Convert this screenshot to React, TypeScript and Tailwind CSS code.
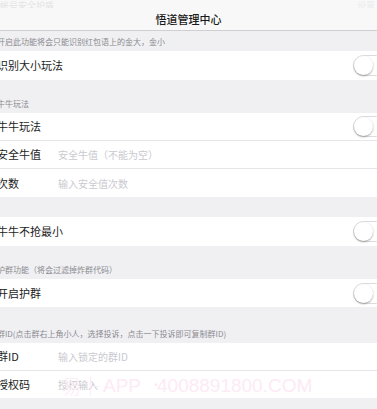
import React from 'react';

const font = { fontFamily: '"Noto Sans CJK SC", "Noto Sans", sans-serif' };

function Toggle() {
  return (
    <div className="relative -mr-[10px] h-[21px] w-[34px] shrink-0 rounded-full border border-[#dcdcdc] bg-white">
      <div className="absolute left-0 top-0 h-[19px] w-[19px] rounded-full bg-white shadow-[0_1px_2px_rgba(0,0,0,0.35)]" />
    </div>
  );
}

function Header({ text, h }: { text: string; h: string }) {
  return (
    <div className={`flex items-end pb-[4px] ${h}`}>
      <span className="-ml-[3px] whitespace-nowrap text-[8px] leading-[10px] text-[#8a8a8f]">{text}</span>
    </div>
  );
}

function Row({
  label,
  placeholder,
  toggle,
  border,
  h = 'h-[28px]',
}: {
  label: string;
  placeholder?: string;
  toggle?: boolean;
  border?: boolean;
  h?: string;
}) {
  return (
    <div className={`flex items-center bg-white ${h} ${border ? 'border-b border-[#e6e6e9]' : ''}`}>
      <span className="-ml-[3px] w-[61px] shrink-0 whitespace-nowrap text-[11px] text-[#1c1c1c]">{label}</span>
      {placeholder && <span className="whitespace-nowrap text-[10px] text-[#cacacf]">{placeholder}</span>}
      <div className="flex-1" />
      {toggle && <Toggle />}
    </div>
  );
}

export default function App() {
  return (
    <div className="relative h-[409px] w-[377px] overflow-hidden bg-[#f0f0f3]" style={font}>
      <div className="h-[31px] border-b border-[#cfcfd2] bg-[#f8f8f8]">
        <div className="flex h-[8px] items-end justify-between overflow-hidden">
          <span className="-mb-[3px] text-[9px] leading-[11px] text-[#e4e4e4]">帐号安全护盾</span>
          <span className="-mb-[3px] mr-[2px] text-[9px] leading-[11px] text-[#ececec]">设置</span>
        </div>
        <div className="flex h-[22px] items-center justify-center text-[11px] font-medium text-[#1a1a1a]">
          悟道管理中心
        </div>
      </div>

      <Header text="开启此功能将会只能识别红包语上的金大，金小" h="h-[20px]" />
      <Row label="识别大小玩法" toggle h="h-[29px]" />

      <Header text="牛牛玩法" h="h-[33px]" />
      <Row label="牛牛玩法" toggle border />
      <Row label="安全牛值" placeholder="安全牛值（不能为空）" border />
      <Row label="次数" placeholder="输入安全值次数" />

      <div className="h-[20px]" />
      <Row label="牛牛不抢最小" toggle h="h-[29px]" />

      <Header text="护群功能（将会过滤掉炸群代码）" h="h-[33px]" />
      <Row label="开启护群" toggle />

      <Header text="群ID(点击群右上角小人，选择投诉，点击一下投诉即可复制群ID)" h="h-[36px]" />
      <Row label="群ID" placeholder="输入锁定的群ID" border />
      <Row label="授权码" placeholder="授权输入" h="h-[27px]" />

      <div className="pointer-events-none absolute left-[62px] top-[371px] flex h-[28px] items-center whitespace-nowrap text-[19px] leading-none text-[#fdeaf4]">
        <span className="w-[41px] font-light">易├</span>
        <span className="w-[47px] font-['Liberation_Sans',sans-serif]">APP</span>
        <span className="w-[7px] text-[12px]">•</span>
        <span className="font-['Liberation_Sans',sans-serif]">4008891800.COM</span>
      </div>
    </div>
  );
}
